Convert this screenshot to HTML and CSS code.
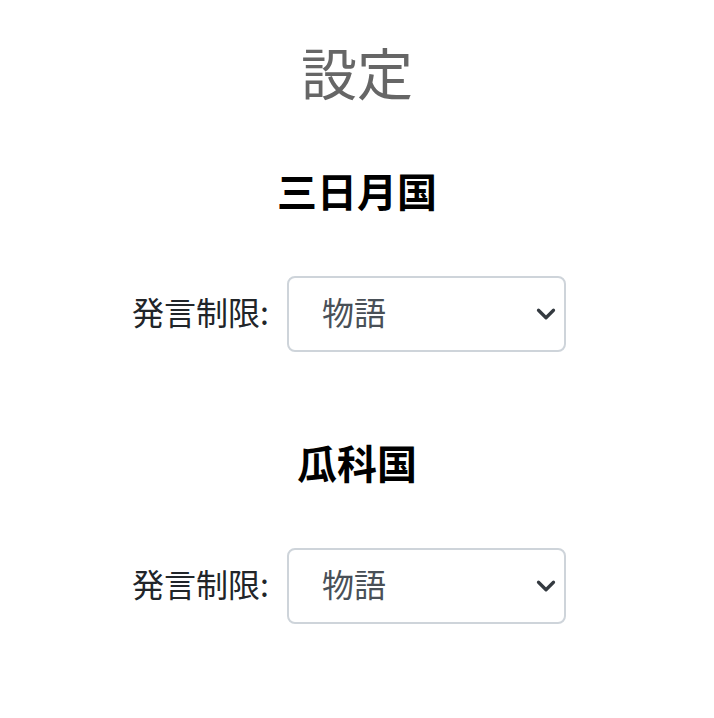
FILE: index.html
```html
<!DOCTYPE html>
<html lang="ja">
<head>
<meta charset="utf-8">
<title>設定</title>
<link rel="stylesheet" href="styles.css">
</head>
<body>
<main class="page">
  <h1 class="title">設定</h1>
  <section class="country">
    <h2 class="country-name">三日月国</h2>
    <div class="row">
      <label class="label" for="s1">発言制限:</label>
      <div class="select-wrap">
        <select id="s1" class="select"><option>物語</option></select>
        <svg class="chev" viewBox="0 0 16 16" width="20" height="20"><path d="M2 5l6 6 6-6" fill="none" stroke="#343a40" stroke-width="2.6" stroke-linecap="round" stroke-linejoin="round"/></svg>
      </div>
    </div>
  </section>
  <section class="country">
    <h2 class="country-name">瓜科国</h2>
    <div class="row">
      <label class="label" for="s2">発言制限:</label>
      <div class="select-wrap">
        <select id="s2" class="select"><option>物語</option></select>
        <svg class="chev" viewBox="0 0 16 16" width="20" height="20"><path d="M2 5l6 6 6-6" fill="none" stroke="#343a40" stroke-width="2.6" stroke-linecap="round" stroke-linejoin="round"/></svg>
      </div>
    </div>
  </section>
</main>
</body>
</html>
```

FILE: styles.css
```css
* { box-sizing: border-box; }
body {
  margin: 0;
  background: #fff;
  font-family: "Noto Sans CJK JP", "Noto Sans", sans-serif;
  color: #212529;
}
.page {
  text-align: center;
  padding-top: 37px;
}
.title {
  margin: 0;
  font-size: 56px;
  line-height: 67px;
  font-weight: 400;
  color: #666;
}
.country {
  margin-top: 62px;
}
.country + .country {
  margin-top: 86px;
}
.country-name {
  margin: 0 0 62px;
  font-size: 40px;
  line-height: 48px;
  font-weight: 700;
  color: #000;
}
.row {
  display: flex;
  justify-content: center;
  align-items: center;
  gap: 18px;
  padding-right: 16px;
}
.label {
  font-size: 32px;
  line-height: 48px;
  padding-bottom: 6px;
  color: #212529;
}
.select-wrap {
  position: relative;
  width: 279px;
  height: 76px;
}
.select {
  appearance: none;
  -webkit-appearance: none;
  width: 100%;
  height: 100%;
  margin: 0;
  padding: 0 60px 6px 33px;
  border: 2px solid #ced4da;
  border-radius: 8px;
  background: #fff;
  font-family: "Noto Sans CJK JP", "Noto Sans", sans-serif;
  font-size: 32px;
  color: #495057;
  text-align: left;
}
.chev {
  position: absolute;
  right: 10px;
  top: 28px;
  pointer-events: none;
}
```
